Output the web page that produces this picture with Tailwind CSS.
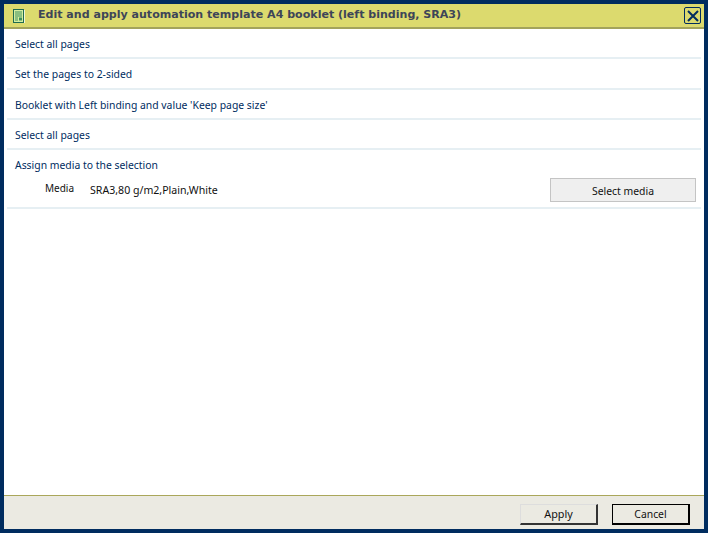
<!DOCTYPE html>
<html lang="en">
<head>
    <meta charset="UTF-8">
    <title>Edit and apply automation template</title>
    <script src="https://cdn.jsdelivr.net/npm/@tailwindcss/browser@4"></script>
</head>
<body class="bg-white">
    <div class="w-[708px] h-[533px] border-4 border-[#002c5f] flex flex-col overflow-hidden bg-white font-['Noto_Sans',sans-serif] text-[10.4px] text-[#002c5f]">

        <!-- Title bar -->
        <div class="h-[25px] shrink-0 flex items-center bg-[#dcda6e] border-b-2 border-[#a3a35c]">
            <svg class="ml-[9px] w-[12px] h-[14px] shrink-0" viewBox="0 0 12 14">
                <rect x="11" y="1" width="1" height="13" fill="#f4f6d8"/>
                <rect x="0.5" y="0.5" width="10" height="13" fill="#d4eea0" stroke="#1f6b50"/>
                <path d="M2 3h7M2 5h7M2 7h7M2 9h3M2 11h3" stroke="#3f8f5e"/>
                <rect x="6" y="8.5" width="3" height="3" fill="#3f8f5e"/>
            </svg>
            <span class="ml-[13px] font-['DejaVu_Sans',sans-serif] font-bold text-[11.05px] text-[#3d4558] whitespace-nowrap">Edit and apply automation template A4 booklet (left binding, SRA3)</span>
            <button class="ml-auto mr-[3px] w-[17px] h-[17px] border border-[#002c5f] rounded-[2px] flex items-center justify-center">
                <svg class="w-[12px] h-[12px]" viewBox="0 0 12 12"><path d="M1 1l10 10M11 1L1 11" stroke="#002c5f" stroke-width="2"/></svg>
            </button>
        </div>

        <!-- Steps -->
        <div class="flex-1 px-[3px]">
            <div class="h-[30px] pl-[8px] pt-[3px] flex items-center border-b-2 border-[#e6eff3]">Select all pages</div>
            <div class="h-[31px] pl-[8px] pt-[2px] flex items-center border-b-2 border-[#e6eff3]">Set the pages to 2-sided</div>
            <div class="h-[30px] pl-[8px] pt-[3px] flex items-center border-b-2 border-[#e6eff3]">Booklet with Left binding and value 'Keep page size'</div>
            <div class="h-[30px] pl-[8px] pt-[3px] flex items-center border-b-2 border-[#e6eff3]">Select all pages</div>
            <div class="h-[59px] pl-[8px] pr-[5px] border-b-2 border-[#e6eff3]">
                <div class="pt-[9px] leading-[13px]">Assign media to the selection</div>
                <div class="flex items-start mt-[6px]">
                    <span class="ml-[30px] w-[45px] mt-[3px] text-[10px] text-[#111]">Media</span>
                    <span class="mt-[5px] text-[10.6px] text-[#111]">SRA3,80 g/m2,Plain,White</span>
                    <button class="ml-auto w-[146px] h-[24px] pt-[3px] bg-[#efefef] border border-[#c4c4c4] text-[#111]">Select media</button>
                </div>
            </div>
        </div>

        <!-- Footer -->
        <div class="h-[34px] shrink-0 bg-[#ebeae2] border-t border-[#aaa75a] flex justify-end items-start gap-[14px] pt-[8px] pr-[14px] text-[#111]">
            <button class="w-[78px] h-[21px] text-[10.8px] bg-[#ebeae2] border border-[#ddd] border-r-2 border-b-2 border-r-[#333] border-b-[#333]">Apply</button>
            <button class="w-[78px] h-[21px] pt-[2px] bg-[#ebeae2] border border-black border-r-2 border-b-2">Cancel</button>
        </div>
    </div>
</body>
</html>
